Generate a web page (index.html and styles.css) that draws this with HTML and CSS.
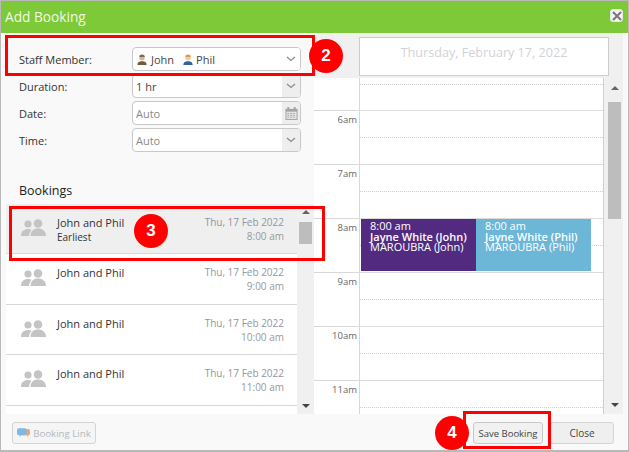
FILE: index.html
```html
<!DOCTYPE html>
<html lang="en">
<head>
<meta charset="utf-8">
<title>Add Booking</title>
<link rel="stylesheet" href="styles.css">
</head>
<body>
<div class="window">
  <header class="titlebar">
    <span class="title">Add Booking</span>
    <button class="close-x" aria-label="Close"><svg width="10" height="10" viewBox="0 0 10 10"><path d="M1 1l8 8M9 1l-8 8" stroke="#777" stroke-width="2" fill="none"/></svg></button>
  </header>
  <div class="main">
    <section class="left">
      <div class="form">
        <div class="field">
          <label class="label">Staff Member:</label>
          <div class="input">
            <span class="value staff">
              <svg class="avatar" width="10" height="12" viewBox="0 0 13 15"><circle cx="6.500" cy="4.500" r="3.500" fill="#d9b48f"/><path d="M3 3.500a3.500 3 0 0 1 7 0z" fill="#7d6a55"/><path d="M0.500 14c0-4 2.500-5 6-5s6 1 6 5z" fill="#6e5b45"/></svg>
              <span>John</span>
              <svg class="avatar second" width="10" height="12" viewBox="0 0 13 15"><circle cx="6.500" cy="4.500" r="3.500" fill="#f5c8a0"/><path d="M3 3.500a3.500 3 0 0 1 7 0z" fill="#e8954a"/><path d="M0.500 14c0-4 2.500-5 6-5s6 1 6 5z" fill="#2f62a8"/></svg>
              <span>Phil</span>
            </span>
            <span class="addon plain"><svg width="10" height="6" viewBox="0 0 10 6"><path d="M1 1l4 3.500 4-3.500" stroke="#8c8c8c" stroke-width="1.300" fill="none"/></svg></span>
          </div>
        </div>
        <div class="field">
          <label class="label">Duration:</label>
          <div class="input">
            <span class="value">1 hr</span>
            <span class="addon"><svg width="10" height="6" viewBox="0 0 10 6"><path d="M1 1l4 3.500 4-3.500" stroke="#8c8c8c" stroke-width="1.300" fill="none"/></svg></span>
          </div>
        </div>
        <div class="field">
          <label class="label">Date:</label>
          <div class="input">
            <span class="value auto">Auto</span>
            <span class="addon"><svg width="13" height="13" viewBox="0 0 13 14"><rect x="0" y="2" width="13" height="12" fill="#a3a3a3"/><rect x="1" y="5" width="11" height="8" fill="#e4e4e4"/><rect x="2" y="0" width="2" height="3" fill="#a3a3a3"/><rect x="9" y="0" width="2" height="3" fill="#a3a3a3"/><path d="M2 7h9M2 9h9M2 11h9" stroke="#a8a8a8" stroke-width="1" stroke-dasharray="2 1"/></svg></span>
          </div>
        </div>
        <div class="field">
          <label class="label">Time:</label>
          <div class="input">
            <span class="value auto">Auto</span>
            <span class="addon"><svg width="10" height="6" viewBox="0 0 10 6"><path d="M1 1l4 3.500 4-3.500" stroke="#8c8c8c" stroke-width="1.300" fill="none"/></svg></span>
          </div>
        </div>
      </div>
      <h3 class="section-title">Bookings</h3>
      <div class="list-wrap">
        <div class="list">
          <div class="row selected">
            <svg class="group" width="25" height="18" viewBox="0 0 25 18"><circle cx="7" cy="5" r="3.600" fill="#c4c4c4"/><circle cx="17" cy="4.500" r="4.300" fill="#c4c4c4"/><path d="M0 17c0-5 3-7 7-7 1.500 0 2.600.3 3.500 1-1.500 1.500-2.300 3.500-2.500 6z" fill="#c4c4c4"/><path d="M9.500 17c0-5 3-7.500 7.500-7.500s8 2.500 8 7.500z" fill="#c4c4c4"/></svg>
            <div class="who"><div class="name">John and Phil</div><div class="note">Earliest</div></div>
            <div class="when"><div class="date">Thu, 17 Feb 2022</div><div class="time">8:00 am</div></div>
          </div>
          <div class="row">
            <svg class="group" width="25" height="18" viewBox="0 0 25 18"><circle cx="7" cy="5" r="3.600" fill="#c4c4c4"/><circle cx="17" cy="4.500" r="4.300" fill="#c4c4c4"/><path d="M0 17c0-5 3-7 7-7 1.500 0 2.600.3 3.500 1-1.500 1.500-2.300 3.500-2.500 6z" fill="#c4c4c4"/><path d="M9.500 17c0-5 3-7.500 7.500-7.500s8 2.500 8 7.500z" fill="#c4c4c4"/></svg>
            <div class="who"><div class="name">John and Phil</div></div>
            <div class="when"><div class="date">Thu, 17 Feb 2022</div><div class="time">9:00 am</div></div>
          </div>
          <div class="row">
            <svg class="group" width="25" height="18" viewBox="0 0 25 18"><circle cx="7" cy="5" r="3.600" fill="#c4c4c4"/><circle cx="17" cy="4.500" r="4.300" fill="#c4c4c4"/><path d="M0 17c0-5 3-7 7-7 1.500 0 2.600.3 3.500 1-1.500 1.500-2.300 3.500-2.500 6z" fill="#c4c4c4"/><path d="M9.500 17c0-5 3-7.500 7.500-7.500s8 2.500 8 7.500z" fill="#c4c4c4"/></svg>
            <div class="who"><div class="name">John and Phil</div></div>
            <div class="when"><div class="date">Thu, 17 Feb 2022</div><div class="time">10:00 am</div></div>
          </div>
          <div class="row">
            <svg class="group" width="25" height="18" viewBox="0 0 25 18"><circle cx="7" cy="5" r="3.600" fill="#c4c4c4"/><circle cx="17" cy="4.500" r="4.300" fill="#c4c4c4"/><path d="M0 17c0-5 3-7 7-7 1.500 0 2.600.3 3.500 1-1.500 1.500-2.300 3.500-2.500 6z" fill="#c4c4c4"/><path d="M9.500 17c0-5 3-7.500 7.500-7.500s8 2.500 8 7.500z" fill="#c4c4c4"/></svg>
            <div class="who"><div class="name">John and Phil</div></div>
            <div class="when"><div class="date">Thu, 17 Feb 2022</div><div class="time">11:00 am</div></div>
          </div>
        </div>
        <div class="scrollbar list-scroll">
          <span class="arrow up"></span>
          <span class="thumb"></span>
          <span class="arrow down"></span>
        </div>
      </div>
    </section>
    <section class="right">
      <div class="cal-head"><div class="cal-date">Thursday, February 17, 2022</div></div>
      <div class="cal-body">
        <div class="times">
          <div class="tcell first"></div>
          <div class="tcell">6am</div>
          <div class="tcell">7am</div>
          <div class="tcell">8am</div>
          <div class="tcell">9am</div>
          <div class="tcell">10am</div>
          <div class="tcell">11am</div>
        </div>
        <div class="day">
          <div class="hour first"></div>
          <div class="hour"></div>
          <div class="hour"></div>
          <div class="hour has-events">
            <div class="event purple"><div class="etime">8:00 am</div><div class="strong">Jayne White (John)</div><div>MAROUBRA (John)</div></div>
            <div class="event blue"><div class="etime">8:00 am</div><div class="strong">Jayne White (Phil)</div><div>MAROUBRA (Phil)</div></div>
          </div>
          <div class="hour"></div>
          <div class="hour"></div>
          <div class="hour"></div>
        </div>
        <div class="scrollbar cal-scroll">
          <span class="arrow up"></span>
          <span class="thumb"></span>
          <span class="arrow down"></span>
        </div>
      </div>
    </section>
  </div>
  <footer class="footer">
    <button class="btn link-btn">
      <svg width="13" height="10" viewBox="0 0 15 11"><path d="M6 1h7a2 2 0 0 1 2 2v3a2 2 0 0 1-2 2v2l-2-2H6z" fill="#eaa672"/><path d="M2 0h7a2 2 0 0 1 2 2v4a2 2 0 0 1-2 2H5l-2 2V8H2a2 2 0 0 1-2-2V2a2 2 0 0 1 2-2z" fill="#7fb8e2"/></svg>
      <span>Booking Link</span>
    </button>
    <button class="btn save-btn">Save Booking</button>
    <button class="btn close-btn">Close</button>
  </footer>

  <div class="mark box-staff"></div>
  <div class="mark box-row"></div>
  <div class="mark box-save"></div>
  <div class="badge badge-2">2</div>
  <div class="badge badge-3">3</div>
  <div class="badge badge-4">4</div>
</div>
</body>
</html>
```

FILE: styles.css
```css
* { box-sizing: border-box; }
html, body { margin: 0; padding: 0; }
body { width: 629px; height: 452px; overflow: hidden; background: #fff; font-family: "Open Sans", "Liberation Sans", sans-serif; }

.window { position: relative; width: 629px; height: 452px; display: flex; flex-direction: column; border: 1px solid #b9b9b9; border-bottom-width: 2px; background: #f9f9f9; }

.titlebar { height: 32px; flex: none; background: #7dc937; display: flex; align-items: center; justify-content: space-between; padding: 0 5px 0 4px; }
.title { color: #f1f8e6; font-size: 13.700px; line-height: 34px; }
.close-x { width: 13px; height: 13px; padding: 0; margin-bottom: 3px; display: flex; align-items: center; justify-content: center; border: 1px solid #e8e8e8; border-radius: 3px; background: #f4f4f4; }

.main { flex: 1; display: flex; min-height: 0; }

.left { width: 313px; flex: none; display: flex; flex-direction: column; }
.form { padding-top: 14px; display: flex; flex-direction: column; gap: 3px; }
.field { display: flex; align-items: center; height: 24px; padding-left: 18px; }
.label { width: 113px; padding-top: 2px; font-size: 11px; line-height: 16px; color: #333; }
.input { width: 169px; height: 24px; display: flex; justify-content: space-between; background: #fff; border: 1px solid #c8c8c8; border-radius: 4px; overflow: hidden; }
.value { padding: 1px 0 0 3px; font-size: 11px; line-height: 22px; color: #444; display: flex; align-items: center; }
.value.auto { color: #8a8a8a; }
.staff { padding-left: 4px; color: #444; }
.avatar { margin-right: 4px; }
.avatar.second { margin-left: 9px; margin-right: 3px; }
.addon { width: 18px; background: #eee; display: flex; align-items: center; justify-content: center; }
.addon.plain { background: #fff; }

.section-title { margin: 29px 0 0 18px; height: 23px; font-size: 12.500px; font-weight: 400; line-height: 20px; color: #222; }

.list-wrap { flex: 1; min-height: 0; display: flex; padding-left: 5px; }
.list { width: 291px; flex: none; background: #fff; overflow: hidden; }
.row { height: 50.400px; display: flex; padding: 11px 13px 0 15px; background: #fff; border-bottom: 1px solid #d8d8d8; }
.row.selected { background: #efefef; }
.group { margin-top: 4px; margin-right: 11px; flex: none; }
.who { flex: 1; }
.name { font-size: 11px; line-height: 16px; color: #333; }
.note { font-size: 10px; line-height: 12px; color: #333; }
.when { text-align: right; }
.date { font-size: 10px; line-height: 14px; color: #9097a3; }
.time { font-size: 10px; line-height: 14px; color: #999; }

.scrollbar { background: #f0f0f0; display: flex; flex-direction: column; align-items: center; flex: none; }
.list-scroll { width: 17px; }
.thumb { background: #bdbdbd; width: 13px; }
.arrow { display: block; width: 0; height: 0; border-left: 4px solid transparent; border-right: 4px solid transparent; }
.arrow.up { border-bottom: 4px solid #666; }
.arrow.down { border-top: 4px solid #444; margin-top: auto; }
.list-scroll .arrow.up { margin-top: 6px; }
.list-scroll .thumb { margin-top: 8px; height: 22px; }
.list-scroll .arrow.down { margin-bottom: 6px; }

.right { flex: 1; min-width: 0; display: flex; flex-direction: column; padding-right: 5px; }
.cal-head { height: 45px; flex: none; background: #f0f0f0; padding: 4px 14px 2px 45px; }
.cal-date { height: 39px; background: #fff; border: 1px solid #ccc; text-align: center; font-size: 12.600px; line-height: 29px; color: #d2d3d6; }
.cal-body { flex: 1; min-height: 0; display: flex; overflow: hidden; }
.times { width: 46px; flex: none; background: #fff; border-right: 1px solid #d8d8d8; overflow: hidden; }
.tcell { height: 54px; border-top: 1px solid #d8d8d8; text-align: right; padding-right: 2px; font-size: 9.500px; line-height: 17px; color: #666; }
.tcell.first { height: 32px; border-top: 0; }
.day { width: 244px; flex: none; background: #fff; border-right: 1px solid #d0d0d0; overflow: hidden; }
.hour { position: relative; display: flow-root; height: 54px; border-top: 1px solid #dcdcdc; }
.hour::after { content: ""; display: block; margin-top: 26px; border-top: 1px dotted #cfcfcf; }
.hour.first { height: 32px; border-top: 0; }
.hour.first::after { margin-top: 6px; }
.event { position: absolute; top: 0; width: 115px; height: 52px; padding-left: 9px; color: #fff; font-size: 11px; line-height: 10px; z-index: 1; }
.etime { line-height: 12px; margin-top: 1px; }
.strong { font-weight: 600; }
.purple { left: 1px; background: #522b80; }
.blue { left: 116px; background: #6cb6d8; }
.cal-scroll { width: 19px; padding-left: 2px; }
.cal-scroll .arrow.up { margin-top: 8px; }
.cal-scroll .thumb { margin-top: 12px; height: 117px; }
.cal-scroll .arrow.down { margin-bottom: 7px; }

.footer { height: 36px; flex: none; display: flex; align-items: flex-start; padding: 8px 14px 0 11px; background: #f9f9f9; }
.btn { height: 22px; padding: 0; font-family: inherit; font-size: 9.500px; color: #444; background: #f4f4f4; border: 1px solid #d4d4d4; border-radius: 3px; display: flex; align-items: center; justify-content: center; }
.link-btn { width: 84px; gap: 3px; font-size: 9.700px; color: #b4b8bd; background: #f5f5f5; }
.save-btn { width: 70px; margin-left: auto; background: #f1f1f1; border-color: #c8c8c8; }
.close-btn { width: 64px; margin-left: 7px; font-size: 10px; background: #efefef; }

.mark { position: absolute; border: 3px solid #f00; pointer-events: none; z-index: 2; }
.box-staff { left: 4px; top: 34px; width: 310px; height: 41px; }
.box-row { left: 8px; top: 205px; width: 316px; height: 55px; }
.box-save { left: 462px; top: 410px; width: 88px; height: 38px; }
.badge { position: absolute; width: 34px; height: 34px; border-radius: 50%; background: #f00; color: #fff; font-family: "Liberation Sans", Arial, sans-serif; font-size: 17px; font-weight: 700; line-height: 34px; text-align: center; z-index: 3; }
.badge-2 { left: 308px; top: 38px; }
.badge-3 { left: 133px; top: 213px; }
.badge-4 { left: 434px; top: 415px; }
```
